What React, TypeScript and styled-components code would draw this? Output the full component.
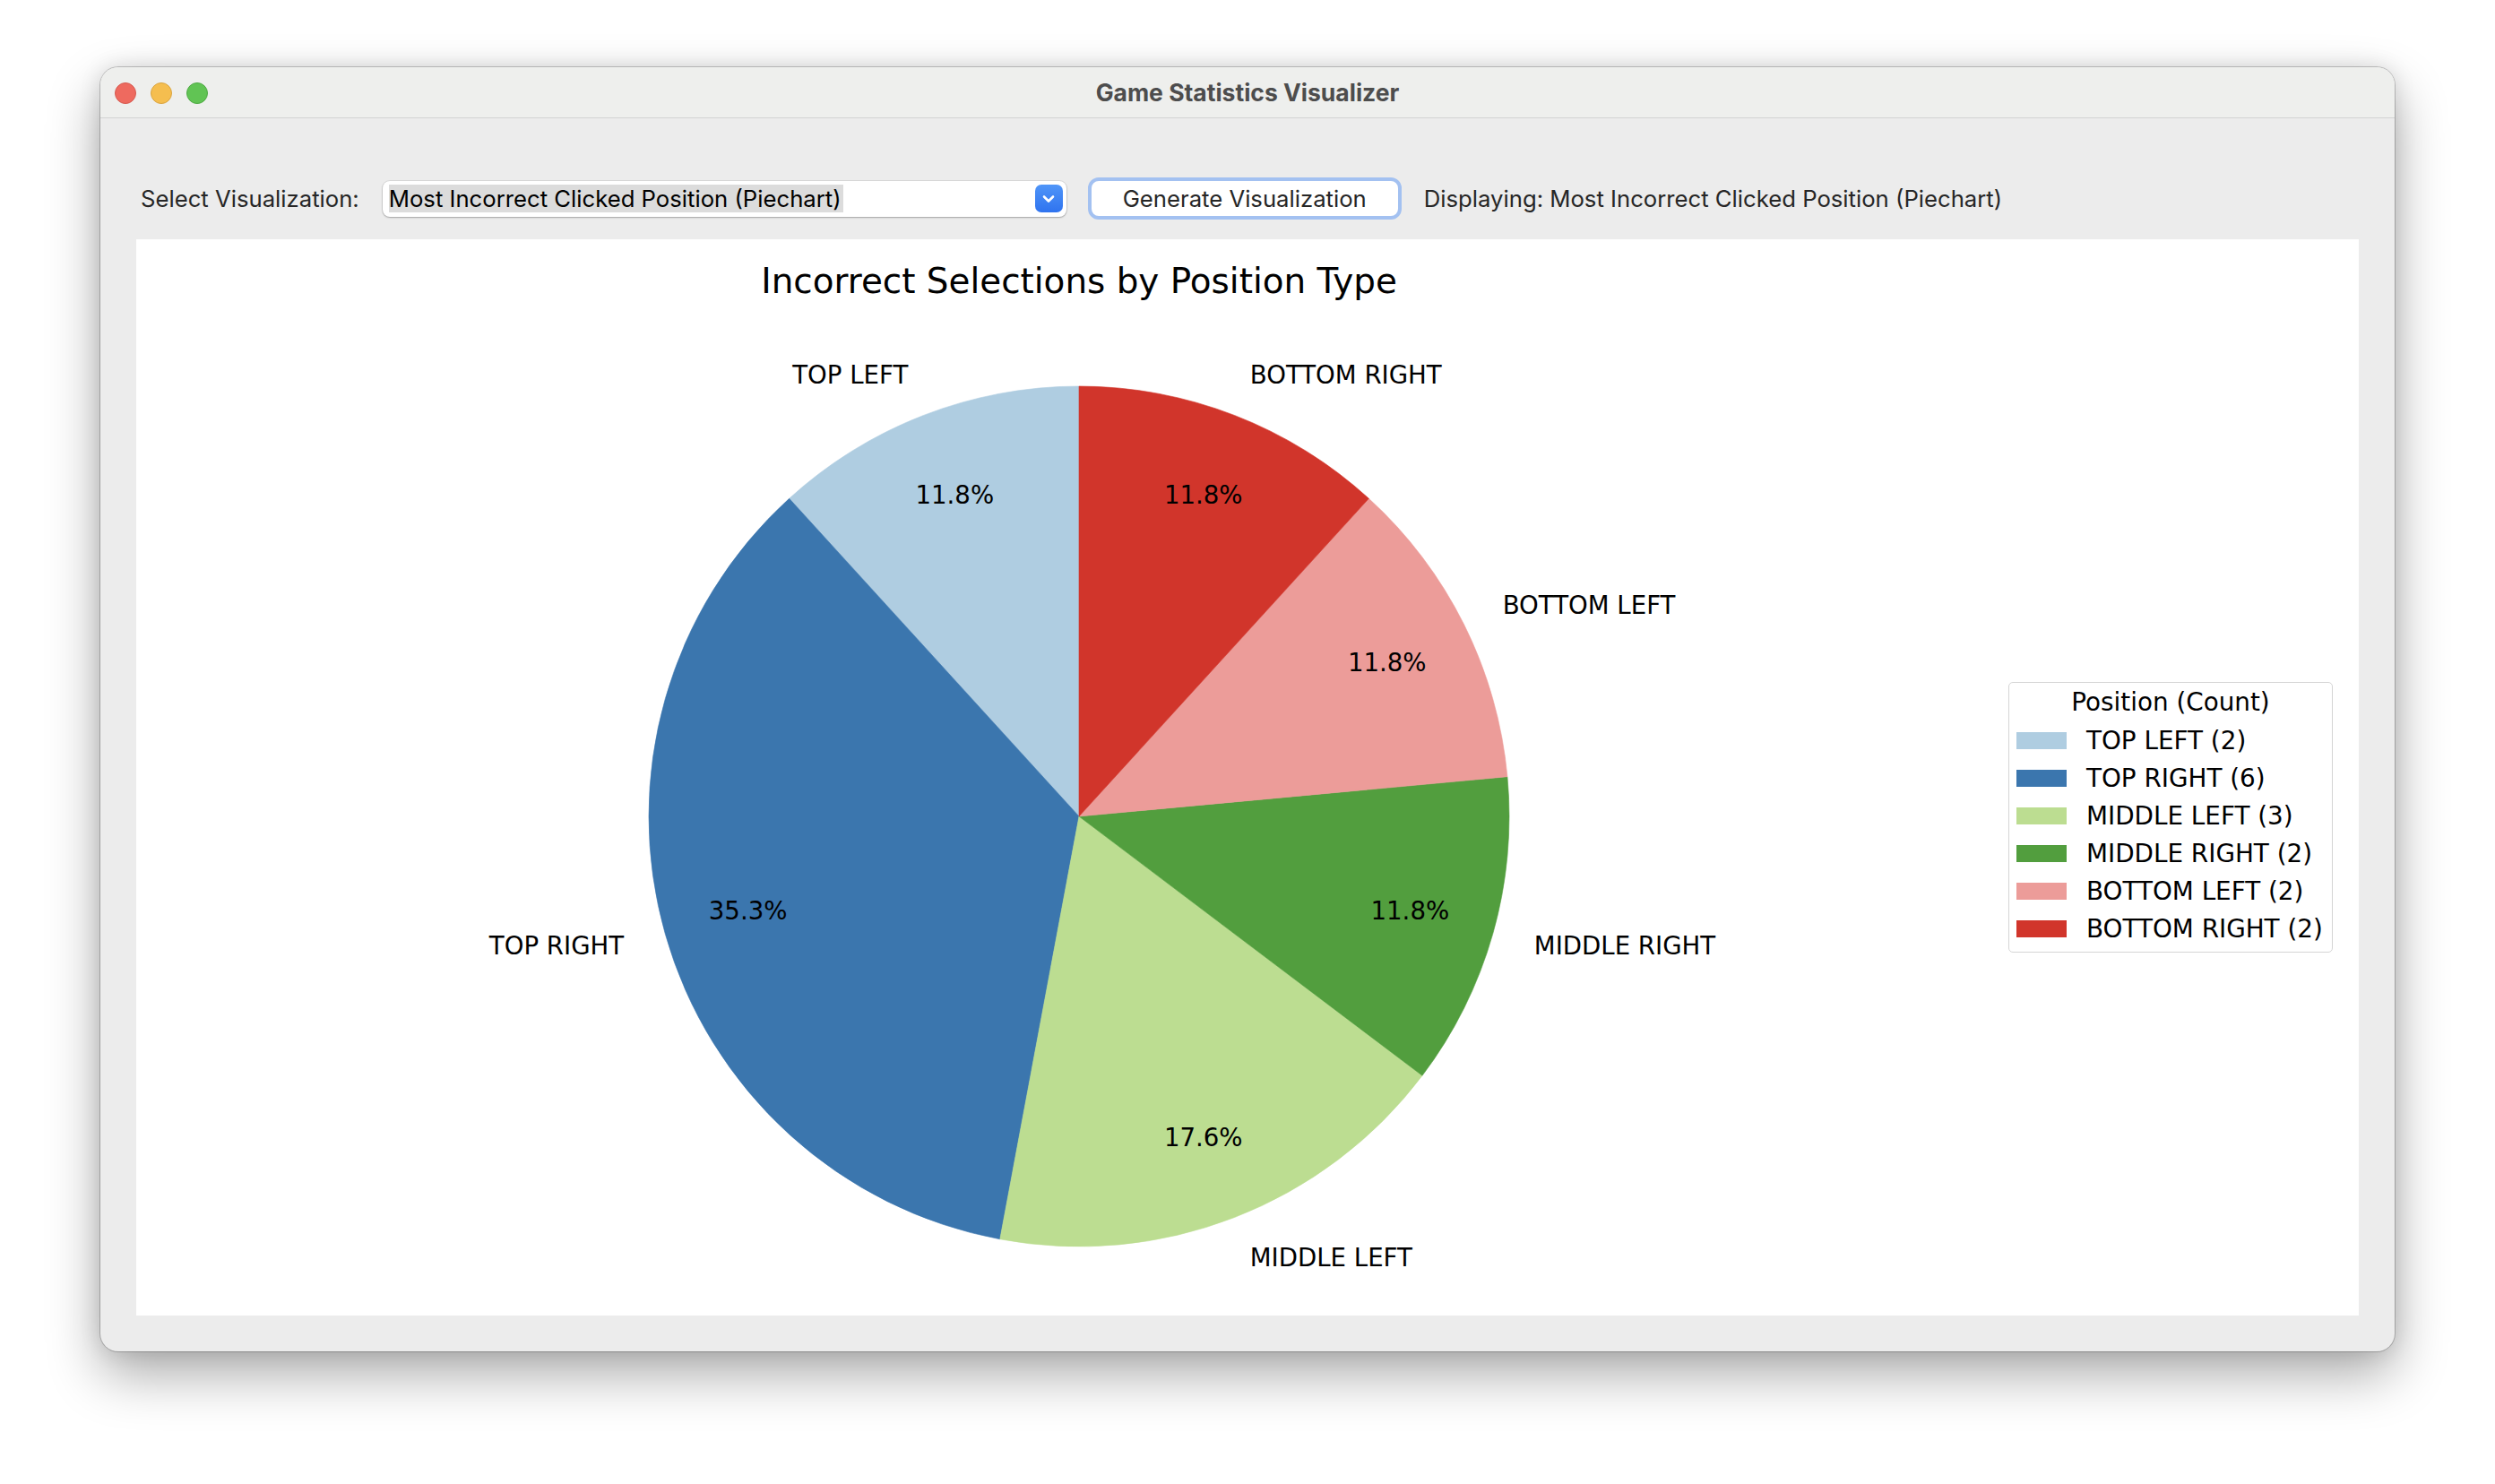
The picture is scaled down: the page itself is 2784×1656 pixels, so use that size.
import styled, { createGlobalStyle } from 'styled-components'

const GlobalStyle = createGlobalStyle`
  html, body {
    margin: 0;
    padding: 0;
    background: #ffffff;
  }
`

const slices = [
  { name: 'TOP LEFT', count: 2, color: '#afcde1' },
  { name: 'TOP RIGHT', count: 6, color: '#3b76ae' },
  { name: 'MIDDLE LEFT', count: 3, color: '#bcdd91' },
  { name: 'MIDDLE RIGHT', count: 2, color: '#529e3e' },
  { name: 'BOTTOM LEFT', count: 2, color: '#ec9c99' },
  { name: 'BOTTOM RIGHT', count: 2, color: '#d1352b' },
]

const Page = styled.div`
  width: 2784px;
  height: 1656px;
  box-sizing: border-box;
  padding: 75px 112px 0;
`

const Window = styled.div`
  width: 2560px;
  height: 1433px;
  border-radius: 20px;
  overflow: hidden;
  background: #ececec;
  display: flex;
  flex-direction: column;
  box-shadow: 0 0 0 1px rgba(0, 0, 0, 0.2), 0 26px 60px rgba(0, 0, 0, 0.33),
    0 0 24px rgba(0, 0, 0, 0.12);
`

const TitleBar = styled.div`
  height: 56px;
  flex-shrink: 0;
  position: relative;
  display: flex;
  align-items: center;
  justify-content: center;
  background: #eeefed;
  border-bottom: 1px solid #d3d3d3;
`

const Lights = styled.div`
  position: absolute;
  left: 16px;
  top: 17px;
  display: flex;
  gap: 16px;
`

const Light = styled.span<{ $fill: string; $edge: string }>`
  width: 24px;
  height: 24px;
  border-radius: 50%;
  box-sizing: border-box;
  background: ${(p) => p.$fill};
  border: 1px solid ${(p) => p.$edge};
`

const WindowTitle = styled.div`
  font-family: Inter, 'Liberation Sans', sans-serif;
  font-weight: 700;
  font-size: 26.5px;
  color: #4d4d4d;
`

const Body = styled.div`
  flex: 1;
  display: flex;
  flex-direction: column;
  padding: 66px 40px 40px;
`

const Toolbar = styled.div`
  height: 47px;
  display: flex;
  align-items: center;
  padding-left: 5px;
  font-family: Inter, 'Liberation Sans', sans-serif;
  font-size: 25.7px;
  color: #262626;
`

const FieldLabel = styled.span`
  margin-right: 26px;
`

const Combo = styled.div`
  width: 763px;
  height: 40px;
  box-sizing: border-box;
  display: flex;
  align-items: center;
  justify-content: space-between;
  padding: 0 4px 0 7px;
  background: #ffffff;
  border-radius: 8px;
  box-shadow: 0 0 0 1px rgba(0, 0, 0, 0.08), 0 1px 2px rgba(0, 0, 0, 0.25);
  margin-right: 24px;
`

const ComboText = styled.span`
  background: #dcdcdc;
  color: #000;
  line-height: 31px;
  padding-right: 2px;
`

const ComboArrow = styled.span`
  width: 31px;
  height: 31px;
  border-radius: 7px;
  background: linear-gradient(#4f95f8, #2f73ef);
  display: flex;
  align-items: center;
  justify-content: center;
`

const ActionButton = styled.button`
  width: 350px;
  height: 47px;
  box-sizing: border-box;
  border: 4px solid #a3c1f1;
  border-radius: 12px;
  background: #ffffff;
  font: inherit;
  color: #262626;
  padding: 0;
  margin-right: 25px;
`

const Status = styled.span``

const Canvas = styled.div`
  margin-top: 22px;
  height: 1201px;
  background: #ffffff;
  display: flex;
  font-family: 'DejaVu Sans', sans-serif;
  color: #000;
`

const PlotColumn = styled.div`
  width: 2089px;
  box-sizing: border-box;
  padding-left: 15px;
  display: flex;
  flex-direction: column;
  align-items: center;
`

const ChartTitle = styled.div`
  margin-top: 24px;
  font-size: 38.9px;
  line-height: 46px;
`

const Legend = styled.div`
  align-self: flex-start;
  margin-top: 494px;
  width: 362px;
  box-sizing: border-box;
  padding: 0 8px 5px;
  border: 1px solid #d5d5d5;
  border-radius: 5px;
  font-size: 27.8px;
`

const LegendTitle = styled.div`
  height: 43px;
  line-height: 43px;
  text-align: center;
`

const LegendRow = styled.div`
  height: 42px;
  display: flex;
  align-items: center;
`

const Swatch = styled.span<{ $color: string }>`
  width: 56px;
  height: 19px;
  background: ${(p) => p.$color};
  margin-right: 22px;
`

const W = 1600
const H = 1120
const CX = 800
const CY = 574
const R = 480

function pt(deg: number, r: number) {
  const a = (deg * Math.PI) / 180
  return [CX + r * Math.cos(a), CY - r * Math.sin(a)]
}

function PieChart() {
  const total = slices.reduce((s, d) => s + d.count, 0)
  let start = 90
  return (
    <svg width={W} height={H} viewBox={`0 0 ${W} ${H}`}>
      {slices.map((d) => {
        const span = (360 * d.count) / total
        const end = start + span
        const mid = start + span / 2
        const [x1, y1] = pt(start, R)
        const [x2, y2] = pt(end, R)
        const [lx, ly] = pt(mid, R * 1.1)
        const [px, py] = pt(mid, R * 0.8)
        start = end
        const pct = ((d.count / total) * 100).toFixed(1) + '%'
        return (
          <g key={d.name}>
            <path
              d={`M${CX},${CY} L${x1},${y1} A${R},${R} 0 ${span > 180 ? 1 : 0} 0 ${x2},${y2} Z`}
              fill={d.color}
              stroke={d.color}
              strokeWidth={0.6}
            />
            <text
              x={lx}
              y={ly}
              fontSize={27.6}
              fill="#000"
              textAnchor={lx < CX ? 'end' : 'start'}
              dominantBaseline="central"
            >
              {d.name}
            </text>
            <text
              x={px}
              y={py}
              fontSize={27.6}
              fill="#000"
              textAnchor="middle"
              dominantBaseline="central"
            >
              {pct}
            </text>
          </g>
        )
      })}
    </svg>
  )
}

export default function App() {
  return (
    <>
      <GlobalStyle />
      <Page>
        <Window>
          <TitleBar>
            <Lights>
              <Light $fill="#ee6a5f" $edge="#d55a50" />
              <Light $fill="#f5be4f" $edge="#d9a441" />
              <Light $fill="#61c454" $edge="#4ea943" />
            </Lights>
            <WindowTitle>Game Statistics Visualizer</WindowTitle>
          </TitleBar>
          <Body>
            <Toolbar>
              <FieldLabel>Select Visualization:</FieldLabel>
              <Combo>
                <ComboText>Most Incorrect Clicked Position (Piechart)</ComboText>
                <ComboArrow>
                  <svg width="16" height="10" viewBox="0 0 16 10">
                    <path
                      d="M3 2.5 L8 7.5 L13 2.5"
                      fill="none"
                      stroke="#fff"
                      strokeWidth="2.6"
                      strokeLinecap="round"
                      strokeLinejoin="round"
                    />
                  </svg>
                </ComboArrow>
              </Combo>
              <ActionButton>Generate Visualization</ActionButton>
              <Status>Displaying: Most Incorrect Clicked Position (Piechart)</Status>
            </Toolbar>
            <Canvas>
              <PlotColumn>
                <ChartTitle>Incorrect Selections by Position Type</ChartTitle>
                <PieChart />
              </PlotColumn>
              <Legend>
                <LegendTitle>Position (Count)</LegendTitle>
                {slices.map((d) => (
                  <LegendRow key={d.name}>
                    <Swatch $color={d.color} />
                    {d.name} ({d.count})
                  </LegendRow>
                ))}
              </Legend>
            </Canvas>
          </Body>
        </Window>
      </Page>
    </>
  )
}
